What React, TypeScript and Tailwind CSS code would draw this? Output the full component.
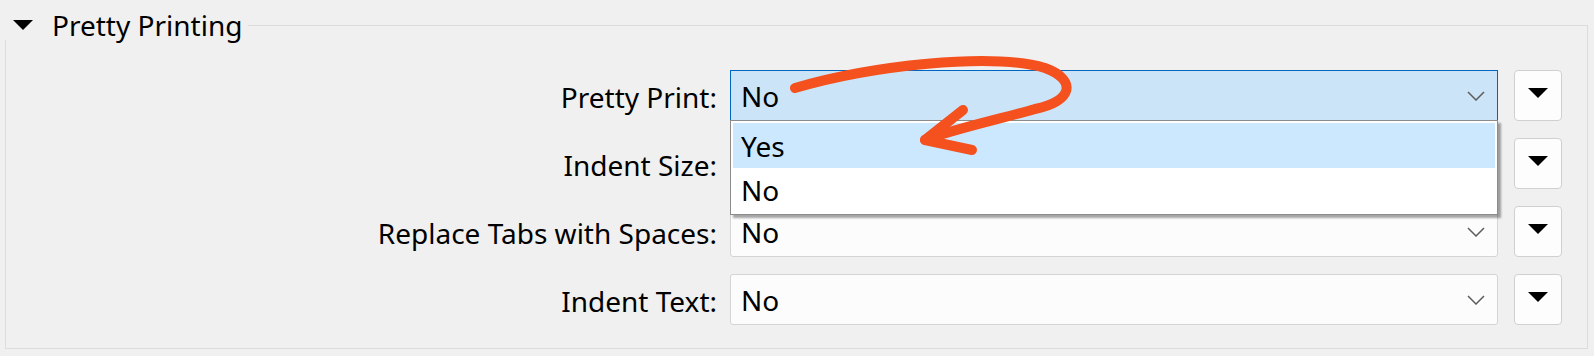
import React from "react";

const filas = [
  { label: "Pretty Print:", value: "No", open: true },
  { label: "Indent Size:", value: "", open: false },
  { label: "Replace Tabs with Spaces:", value: "No", open: false },
  { label: "Indent Text:", value: "No", open: false },
];

function Chevron() {
  return (
    <svg width="18" height="10" viewBox="0 0 18 10" className="shrink-0">
      <path d="M1 1 L9 9 L17 1" fill="none" stroke="#5c5c5c" strokeWidth="1.5" />
    </svg>
  );
}

function Triangulo() {
  return (
    <svg width="20" height="10" viewBox="0 0 20 10">
      <path d="M0 0 H20 L10 10 Z" fill="#000" />
    </svg>
  );
}

function Selector({ value, open }: { value: string; open: boolean }) {
  if (open) {
    return (
      <div className="relative">
        <div className="flex h-[51px] items-center justify-between border border-[#0067c0] bg-[#cce4f7] pl-[10px] pr-[12px]">
          <span>{value}</span>
          <Chevron />
        </div>
        <div className="absolute left-0 right-0 top-[50px] z-10 border border-[#8c8c8c] bg-white p-[2px] shadow-[3px_3px_2px_rgba(0,0,0,0.35)]">
          <div className="flex h-[45px] items-center bg-[#cce8ff] pl-[8px]">Yes</div>
          <div className="flex h-[44px] items-center pl-[8px]">No</div>
        </div>
      </div>
    );
  }
  return (
    <div className="flex h-[51px] items-center justify-between rounded-[3px] border border-[#d4d4d4] bg-[#fcfcfc] pl-[10px] pr-[12px]">
      <span>{value}</span>
      <Chevron />
    </div>
  );
}

export default function App() {
  return (
    <div
      className="relative h-[356px] w-[1594px] overflow-hidden bg-[#f0f0f0] pl-[5px] pr-[6px] text-[28px] text-black"
      style={{ fontFamily: '"Noto Sans", "Open Sans", sans-serif' }}
    >
      <div className="flex h-[40px] items-start">
        <div className="flex h-[50px] items-center gap-[19px] pl-[8px] pr-[6px]">
          <Triangulo />
          <span className="leading-none">Pretty Printing</span>
        </div>
        <div className="mt-[25px] h-[15px] flex-1 border-r border-t border-[#dcdcdc]" />
      </div>

      <div className="grid grid-cols-[1fr_768px_48px] gap-x-[16px] gap-y-[17px] border-x border-b border-[#dcdcdc] pb-[23px] pr-[25px] pt-[30px]">
        {filas.map((f) => (
          <React.Fragment key={f.label}>
            <div className="-mr-[3px] flex items-center justify-end pt-[2px]">{f.label}</div>
            <Selector value={f.value} open={f.open} />
            <div className="flex h-[51px] items-center justify-center rounded-[4px] border border-[#d0d0d0] bg-[#fdfdfd] pb-[6px]">
              <Triangulo />
            </div>
          </React.Fragment>
        ))}
      </div>

      <svg
        className="pointer-events-none absolute left-0 top-0 z-20"
        width="1594"
        height="356"
        viewBox="0 0 1594 356"
      >
        <path
          d="M795 88 C870 66 990 52 1045 68 C1078 80 1072 102 1035 109 C1000 119 950 130 925 140"
          fill="none"
          stroke="#f4511e"
          strokeWidth="10"
          strokeLinecap="round"
          strokeLinejoin="round"
        />
        <path
          d="M963 110 L925 140 L972 150"
          fill="none"
          stroke="#f4511e"
          strokeWidth="10"
          strokeLinecap="round"
          strokeLinejoin="round"
        />
      </svg>
    </div>
  );
}
